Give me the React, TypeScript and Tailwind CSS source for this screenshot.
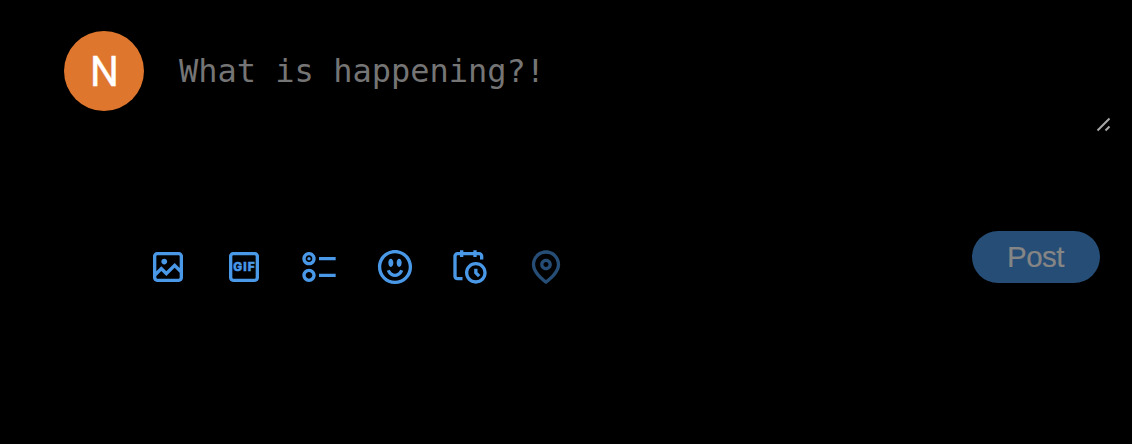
import { useState } from "react";

const icons = [
  {
    label: "Media",
    path: "M3 5.5C3 4.119 4.119 3 5.5 3h13C19.881 3 21 4.119 21 5.5v13c0 1.381-1.119 2.5-2.5 2.5h-13C4.119 21 3 19.881 3 18.5v-13zM5.5 5c-.276 0-.5.224-.5.5v9.086l3-3 3 3 5-5 3 3V5.5c0-.276-.224-.5-.5-.5h-13zM19 15.414l-3-3-5 5-3-3-3 3V18.5c0 .276.224.5.5.5h13c.276 0 .5-.224.5-.5v-3.086zM9.75 7C8.784 7 8 7.784 8 8.75s.784 1.75 1.75 1.75 1.75-.784 1.75-1.75S10.716 7 9.75 7z",
  },
  {
    label: "GIF",
    text: "GIF",
    path: "M3 5.5C3 4.119 4.12 3 5.5 3h13C19.88 3 21 4.119 21 5.5v13c0 1.381-1.12 2.5-2.5 2.5h-13C4.12 21 3 19.881 3 18.5v-13zM5.5 5c-.28 0-.5.224-.5.5v13c0 .276.22.5.5.5h13c.28 0 .5-.224.5-.5v-13c0-.276-.22-.5-.5-.5h-13z",
  },
  {
    label: "Poll",
    path: "M6 5c-1.1 0-2 .895-2 2s.9 2 2 2 2-.895 2-2-.9-2-2-2zM2 7c0-2.209 1.79-4 4-4s4 1.791 4 4-1.79 4-4 4-4-1.791-4-4zm20 1H12V6h10v2zM6 15c-1.1 0-2 .895-2 2s.9 2 2 2 2-.895 2-2-.9-2-2-2zm-4 2c0-2.209 1.79-4 4-4s4 1.791 4 4-1.79 4-4 4-4-1.791-4-4zm20 1H12v-2h10v2zM7 7c0 .552-.45 1-1 1s-1-.448-1-1 .45-1 1-1 1 .448 1 1z",
  },
  {
    label: "Emoji",
    path: "M8 9.5C8 8.119 8.672 7 9.5 7S11 8.119 11 9.5 10.328 12 9.5 12 8 10.881 8 9.5zm6.5 2.5c.828 0 1.5-1.119 1.5-2.5S15.328 7 14.5 7 13 8.119 13 9.5s.672 2.5 1.5 2.5zM12 16c-2.224 0-3.021-2.227-3.051-2.316l-1.897.633c.05.15 1.271 3.684 4.949 3.684s4.898-3.533 4.949-3.684l-1.896-.638c-.033.095-.83 2.322-3.053 2.322zm10.25-4.001c0 5.652-4.598 10.25-10.25 10.25S1.75 17.652 1.75 12 6.348 1.75 12 1.75 22.25 6.348 22.25 12zm-2 0c0-4.549-3.701-8.25-8.25-8.25S3.75 7.451 3.75 12s3.701 8.25 8.25 8.25 8.25-3.701 8.25-8.25z",
  },
  {
    label: "Schedule",
    path: "M6 3V2h2v1h6V2h2v1h1.5C18.88 3 20 4.119 20 5.5v2h-2v-2c0-.276-.22-.5-.5-.5H16v1h-2V5H8v1H6V5H4.5c-.28 0-.5.224-.5.5v12c0 .276.22.5.5.5h3v2h-3C3.12 20 2 18.881 2 17.5v-12C2 4.119 3.12 3 4.5 3H6zm9.5 8c-2.49 0-4.5 2.015-4.5 4.5s2.01 4.5 4.5 4.5 4.5-2.015 4.5-4.5-2.01-4.5-4.5-4.5zM9 15.5C9 11.91 11.91 9 15.5 9s6.5 2.91 6.5 6.5-2.91 6.5-6.5 6.5S9 19.09 9 15.5zm5.5-2.5h2v2.086l1.71 1.707-1.42 1.414-2.29-2.293V13z",
  },
  {
    label: "Location",
    disabled: true,
    path: "M12 7c-1.93 0-3.5 1.57-3.5 3.5S10.07 14 12 14s3.5-1.57 3.5-3.5S13.93 7 12 7zm0 5c-.827 0-1.5-.673-1.5-1.5S11.173 9 12 9s1.5.673 1.5 1.5S12.827 12 12 12zm0-10c-4.687 0-8.5 3.813-8.5 8.5 0 5.967 7.621 11.116 7.945 11.332l.555.37.555-.37c.324-.216 7.945-5.365 7.945-11.332C20.5 5.813 16.687 2 12 2zm0 17.77c-1.665-1.241-6.5-5.196-6.5-9.27C5.5 6.916 8.416 4 12 4s6.5 2.916 6.5 6.5c0 4.073-4.835 8.028-6.5 9.27z",
  },
];

function Toolbar() {
  return (
    <div className="flex gap-[35.6px] pt-4">
      {icons.map((icon) => (
        <button
          key={icon.label}
          aria-label={icon.label}
          disabled={icon.disabled}
          className="size-10 text-[#4a99e9] disabled:opacity-50"
        >
          <svg viewBox="0 0 24 24" className="size-10 fill-current">
            <path d={icon.path} />
            {icon.text && (
              <text
                x="12"
                y="14.65"
                textAnchor="middle"
                textLength="12.8"
                className="fill-current stroke-current stroke-[0.3] font-[Inter,sans-serif] text-[7.1px] font-extrabold"
              >
                {icon.text}
              </text>
            )}
          </svg>
        </button>
      ))}
    </div>
  );
}

export default function App() {
  const [draft, setDraft] = useState("");
  return (
    <main className="h-[444px] bg-black pt-[31px] pr-8 pl-16">
      <div className="flex h-[200px] items-start">
        <div className="flex size-20 shrink-0 items-center justify-center rounded-full bg-[#df762d] font-[Roboto,sans-serif] text-[43px] text-white">
          <span className="scale-x-[.94] [-webkit-text-stroke:0.4px_white]">N</span>
        </div>
        <div className="relative -mr-3 ml-8 h-[102px] grow">
          <textarea
            value={draft}
            onChange={(e) => setDraft(e.target.value)}
            placeholder="What is happening?!"
            className="block h-full w-full resize-none bg-transparent pt-[21px] pr-0.5 pl-[3px] font-['DejaVu_Sans_Mono',monospace] text-[32px] leading-[38px] text-white outline-none placeholder:text-[#757575]"
          />
          <svg
            viewBox="0 0 16 16"
            className="pointer-events-none absolute right-0 bottom-0 size-4 fill-none stroke-[#a8a8a8] stroke-2"
          >
            <path d="M1.5 13.5 13.5 1.5M9.5 13.5l4-4" />
          </svg>
        </div>
      </div>
      <div className="flex items-start justify-between pl-[84px]">
        <Toolbar />
        <button
          disabled
          className="h-[52px] w-32 rounded-full bg-[#254d75] pr-[7px] font-['Liberation_Sans',sans-serif] text-[29.5px] leading-[52px] tracking-[-0.5px] text-[#858585] [-webkit-text-stroke:0.2px_#858585] pl-1.5"
        >
          Post
        </button>
      </div>
    </main>
  );
}
